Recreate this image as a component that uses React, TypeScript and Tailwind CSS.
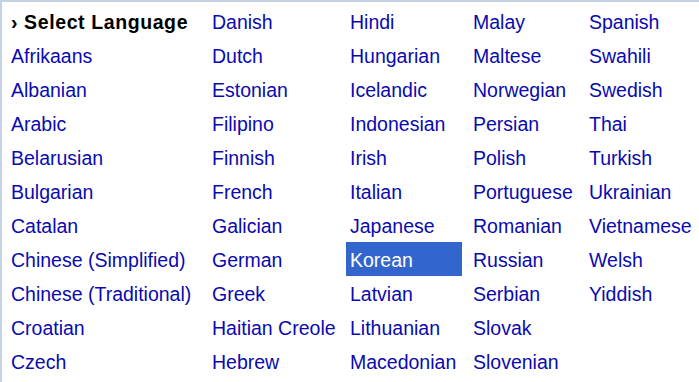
import React from "react"

const columns: string[][] = [
  [
    "Afrikaans",
    "Albanian",
    "Arabic",
    "Belarusian",
    "Bulgarian",
    "Catalan",
    "Chinese (Simplified)",
    "Chinese (Traditional)",
    "Croatian",
    "Czech",
  ],
  [
    "Danish",
    "Dutch",
    "Estonian",
    "Filipino",
    "Finnish",
    "French",
    "Galician",
    "German",
    "Greek",
    "Haitian Creole",
    "Hebrew",
  ],
  [
    "Hindi",
    "Hungarian",
    "Icelandic",
    "Indonesian",
    "Irish",
    "Italian",
    "Japanese",
    "Korean",
    "Latvian",
    "Lithuanian",
    "Macedonian",
  ],
  [
    "Malay",
    "Maltese",
    "Norwegian",
    "Persian",
    "Polish",
    "Portuguese",
    "Romanian",
    "Russian",
    "Serbian",
    "Slovak",
    "Slovenian",
  ],
  [
    "Spanish",
    "Swahili",
    "Swedish",
    "Thai",
    "Turkish",
    "Ukrainian",
    "Vietnamese",
    "Welsh",
    "Yiddish",
  ],
]

const widths = ["w-[194px]", "w-[131px]", "w-[116px]", "w-[109px]", "w-[107px]"]

function MenuItem({ label, active }: { label: string; active?: boolean }) {
  return (
    <div
      className={
        active
          ? "h-[34px] pl-1 pt-[3px] leading-[31px] whitespace-nowrap bg-[#3366cc] text-white"
          : "h-[34px] pl-1 pt-[3px] leading-[31px] whitespace-nowrap text-[#0a0ab0]"
      }
    >
      {label}
    </div>
  )
}

export default function App() {
  return (
    <div className="w-[699px] h-[382px] overflow-hidden bg-white border-t-2 border-l-2 border-[#c5d2e6] pt-[2px] pl-[5px] font-['Liberation_Sans',Arial,sans-serif] text-[19.5px]">
      <div className="flex gap-[7px]">
        {columns.map((col, ci) => (
          <div key={`col-${ci}`} className={`${widths[ci]} flex flex-col shrink-0`}>
            {ci === 0 && (
              <div className="h-[34px] pl-1 pt-[3px] leading-[31px] whitespace-nowrap font-bold text-black tracking-[0.6px]">
                › Select Language
              </div>
            )}
            {col.map((lang) => (
              <MenuItem key={lang} label={lang} active={lang === "Korean"} />
            ))}
          </div>
        ))}
      </div>
    </div>
  )
}
